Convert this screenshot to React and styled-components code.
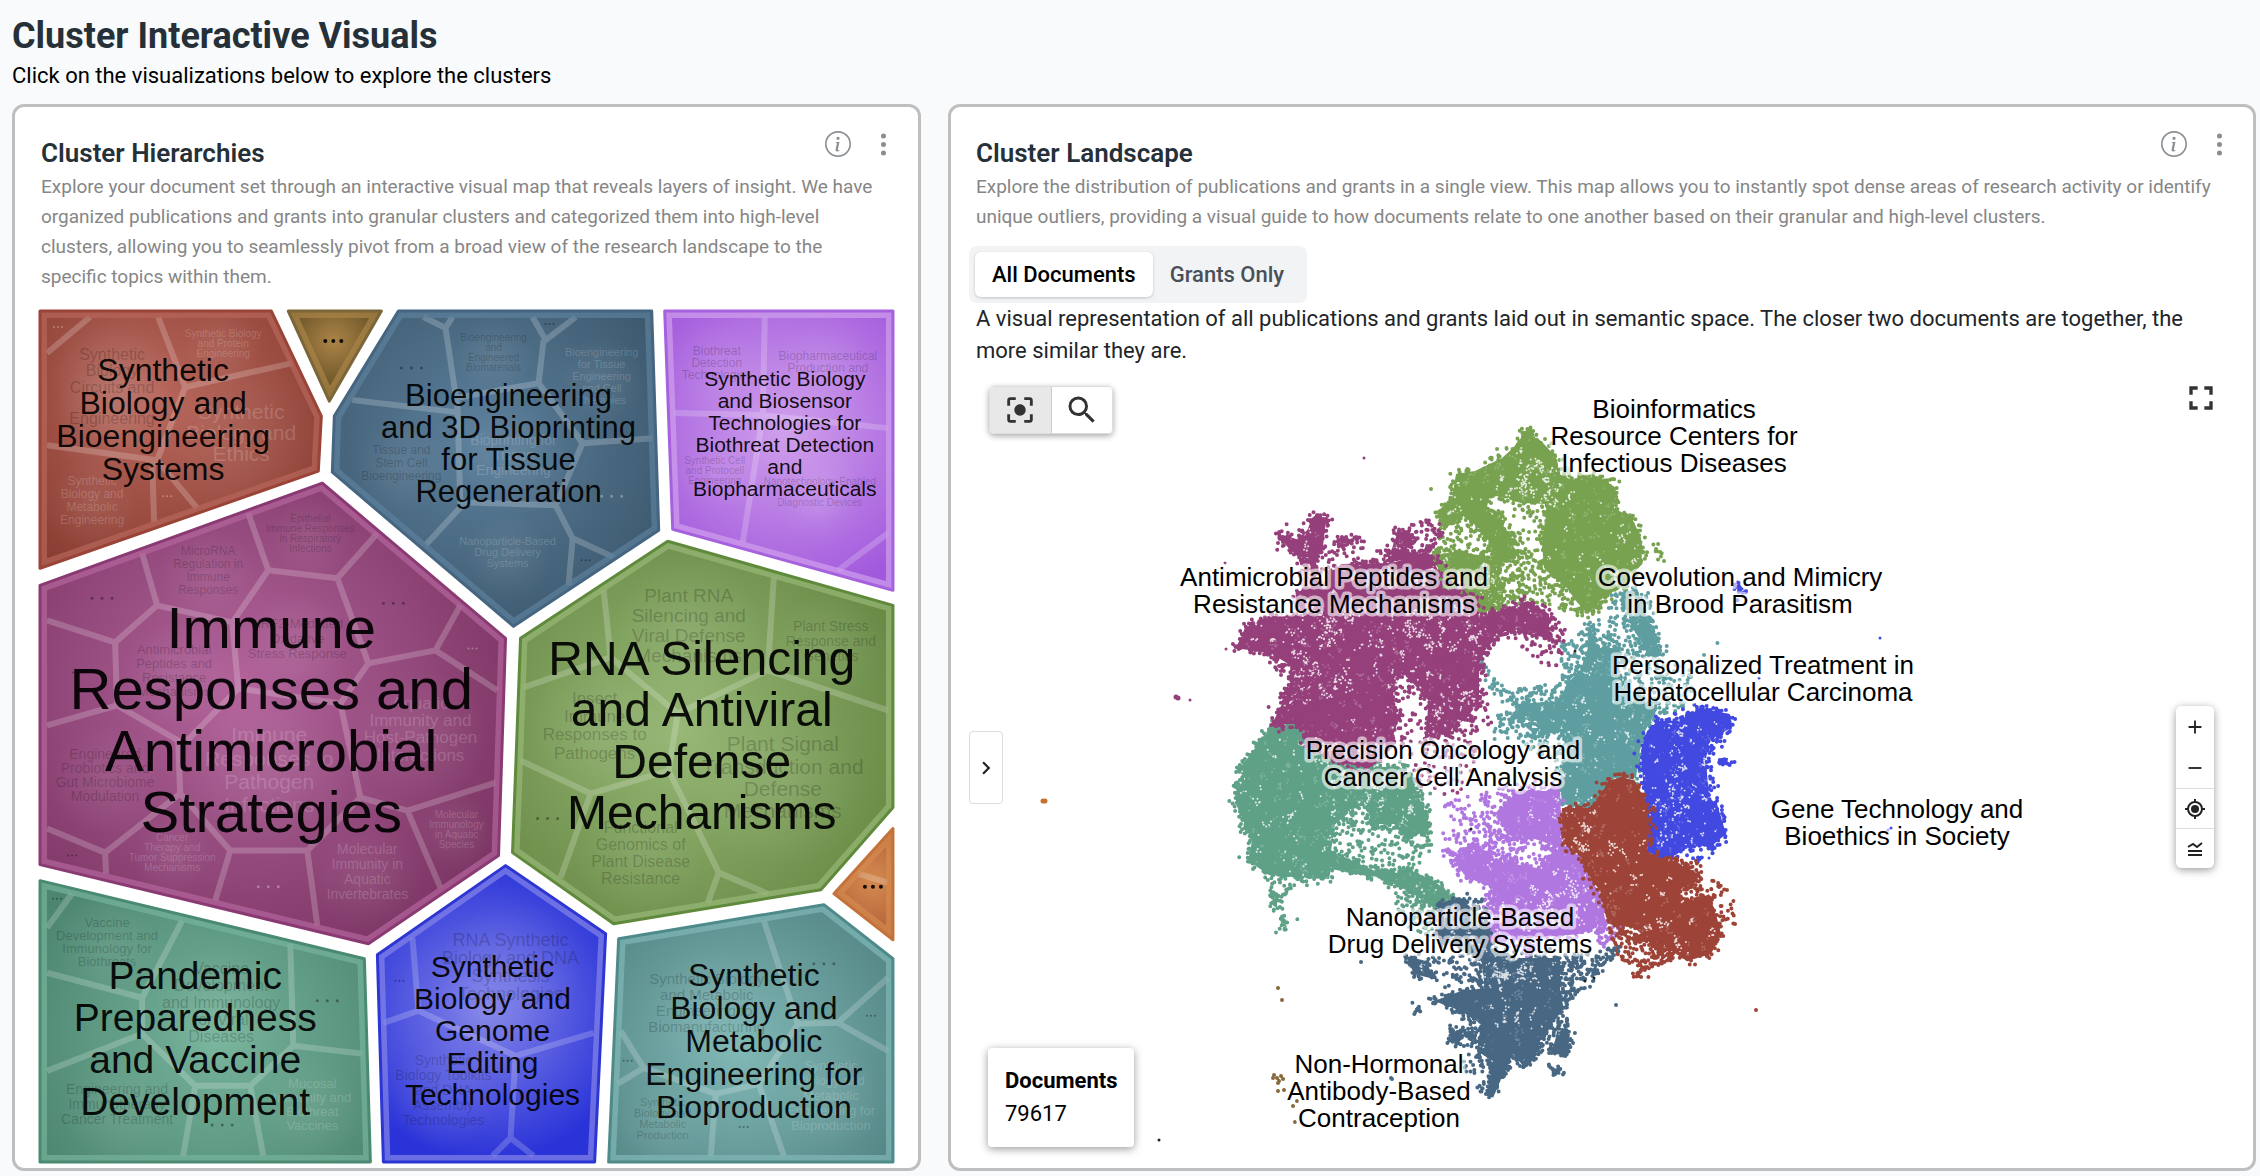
import React, { useMemo, useState } from "react";
import styled, { createGlobalStyle } from "styled-components";
import { BsInfoCircle, BsThreeDotsVertical } from "react-icons/bs";
import { MdAdd, MdCenterFocusStrong, MdChevronRight, MdFullscreen, MdRemove, MdSearch } from "react-icons/md";

const GlobalStyle = createGlobalStyle`
    * {
        box-sizing: border-box;
    }
    body {
        margin: 0;
        background-color: #f9fafb;
        font-family: Roboto, "Liberation Sans", sans-serif;
        color: #212529;
    }
    button {
        font-family: inherit;
        border: none;
        padding: 0;
        cursor: pointer;
    }
`

const Page = styled.main`
    padding: 14px 4px 4px 12px;
`

const PageTitle = styled.h1`
    margin: 0 0 4px;
    font-size: 36px;
    line-height: 44px;
    font-weight: 700;
    color: #263038;
`

const PageHint = styled.p`
    margin: 0 0 14px;
    font-size: 22px;
    line-height: 28px;
    color: #000;
`

const Cards = styled.div`
    display: grid;
    grid-template-columns: 41fr 59fr;
    gap: 27px;
`

const Card = styled.section`
    display: flex;
    flex-direction: column;
    padding: ${(props) => props.$pad};
    background-color: #fff;
    border: 3px solid #bfbfbf;
    border-radius: 12px;
`

const CardText = styled.div`
    padding: 0 ${(props) => props.$inset}px;
`

const CardHeader = styled.header`
    display: flex;
    justify-content: space-between;
    align-items: flex-start;
`

const CardTitle = styled.h2`
    margin: 0 0 3px;
    font-size: 26px;
    line-height: 32px;
    font-weight: 600;
    color: #263038;
`

const CardActions = styled.div`
    display: flex;
    gap: 19px;
    margin: -6px -5px 0 0;
`

const IconButton = styled.button`
    display: flex;
    background: none;
    color: #8a8f94;
`

const Description = styled.p`
    margin: 0;
    font-size: 19px;
    line-height: 30px;
    color: #868686;
`

const TreeSvg = styled.svg`
    display: block;
    width: 100%;
    margin-top: 16px;
    font-family: "Liberation Sans", Arial, sans-serif;
`

const Tabs = styled.div`
    display: flex;
    align-self: flex-start;
    margin-top: 14px;
    padding: 6px;
    background-color: #f1f3f5;
    border-radius: 8px;
`

const Tab = styled.button`
    height: 45px;
    padding: 0 17px;
    font-size: 22px;
    font-weight: 500;
    border-radius: 6px;
    color: ${(props) => (props.$active ? "#000" : "#495057")};
    background-color: ${(props) => (props.$active ? "#fff" : "transparent")};
    box-shadow: ${(props) => (props.$active ? "0 1px 3px rgba(0, 0, 0, 0.2)" : "none")};
`

const Summary = styled.p`
    margin: 0;
    padding: 0 7px;
    font-size: 22px;
    line-height: 32px;
`

const MapArea = styled.div`
    position: relative;
`

const MapSvg = styled.svg`
    display: block;
    width: 100%;
    font-family: "Liberation Sans", Arial, sans-serif;
`

const SelectTools = styled.div`
    position: absolute;
    top: 19px;
    left: 20px;
    display: flex;
    border-radius: 5px;
    overflow: hidden;
    border: 1px solid #ddd;
    box-shadow: 0 2px 6px rgba(0, 0, 0, 0.35);
`

const ToolButton = styled.button`
    display: flex;
    align-items: center;
    justify-content: center;
    width: 61px;
    height: 46px;
    color: #333;
    background-color: ${(props) => (props.$active ? "#e8e8e8" : "#fff")};
    border-left: ${(props) => (props.$divided ? "1px solid #ccc" : "none")};
`

const FullscreenButton = styled(IconButton)`
    position: absolute;
    top: 11px;
    right: 14px;
    color: #333;
`

const ExpandButton = styled.button`
    position: absolute;
    top: 364px;
    left: 0;
    display: flex;
    align-items: center;
    justify-content: center;
    width: 34px;
    height: 73px;
    color: #222;
    background-color: #fff;
    border: 1px solid #ddd;
    border-radius: 4px;
`

const ZoomTools = styled.div`
    position: absolute;
    top: 339px;
    right: 21px;
    display: flex;
    flex-direction: column;
    width: 38px;
    border-radius: 6px;
    overflow: hidden;
    box-shadow: 0 2px 8px rgba(0, 0, 0, 0.4);
`

const ZoomButton = styled.button`
    display: flex;
    align-items: center;
    justify-content: center;
    height: ${(props) => (props.$divided ? 40 : 41)}px;
    color: #222;
    background-color: #fff;
    border-top: ${(props) => (props.$divided ? "1px solid #ddd" : "none")};
`

const CountBox = styled.dl`
    position: absolute;
    left: 19px;
    bottom: 12px;
    margin: 0;
    padding: 16px 17px 17px;
    background-color: #fff;
    border-radius: 4px;
    box-shadow: 0 2px 8px rgba(0, 0, 0, 0.4);
    font-size: 22px;
    line-height: 33px;
    color: #000;

    dt {
        font-weight: 700;
    }
    dd {
        margin: 0;
    }
`

// Each cell: outline, inner divisions, a main label and the labels of its sub clusters.
// sub label: [lines, centre x, first baseline, font size, line height, light]
const cells = [
    {
        id: "red",
        edge: "#84382d",
        mid: "#b7655a",
        line: "#9a4438",
        points: "40,311 271,311 321,416 318,471 40,568",
        center: [163, 400, 220],
        divisions: "M47 353L90 317M158 317L185 387L157 460M185 387L292 363M47 445L157 460M152 460L154 522M157 460L197 508",
        label: [["Synthetic", "Biology and", "Bioengineering", "Systems"], 163, 381, 32, 33],
        subs: [
            [["Synthetic", "Biology"], 112, 360, 16, 16],
            [["Circuits and"], 112, 393, 16, 16],
            [["Engineering"], 112, 424, 16, 16],
            [["Synthetic Biology", "and Protein", "Engineering"], 223, 337, 10, 10, 1],
            [["Synthetic", "Biology and", "Ethics"], 241, 419, 21, 21, 1],
            [["Synthetic", "Biology and", "Metabolic", "Engineering"], 92, 485, 12, 13, 1],
        ],
        dots: [[58, 327, 1, 1], [167, 496, 1, 1]],
    },
    {
        id: "brown",
        edge: "#5e4a22",
        mid: "#ab8447",
        line: "#7a6639",
        points: "288,311 381,311 329,401",
        center: [333, 341, 55],
        divisions: "",
        label: [[], 0, 0, 0, 0],
        subs: [],
        dots: [[333, 341, 2, 0, 1]],
    },
    {
        id: "steel",
        edge: "#3a566b",
        mid: "#5d809c",
        line: "#456580",
        points: "398,311 651,311 658,530 513,626 332,472 334,416",
        center: [480, 440, 220],
        divisions: "M352 400L455 412M532 317L545 340L575 317M543 340L538 383L455 398M423 317L445 328L452 317M445 328L457 407L460 507L425 545M538 383L582 443L652 438M582 443L555 505L460 502M555 505L572 538L568 585M572 538L613 557",
        label: [["Bioengineering", "and 3D Bioprinting", "for Tissue", "Regeneration"], 508, 406, 31, 32],
        subs: [
            [["Bioengineering", "and", "Engineered", "Biomaterials"], 493, 341, 10, 10],
            [["Bioengineering", "for Tissue", "Engineering", "and Cell", "Therapies"], 601, 356, 11, 12, 1],
            [["Tissue and", "Stem Cell", "Bioengineering"], 401, 454, 12, 13],
            [["Bioprinting for", "Tissue", "Engineering"], 513, 445, 14, 15, 1],
            [["Nanoparticle-Based", "Drug Delivery", "Systems"], 507, 545, 11, 11, 1],
        ],
        dots: [[411, 368, 2], [611, 496, 2, 1], [549, 324, 1], [585, 560, 1]],
    },
    {
        id: "violet",
        edge: "#a158dc",
        mid: "#d0a0ec",
        line: "#a661dd",
        points: "664,311 892,311 892,590 672,529",
        center: [785, 430, 170],
        divisions: "M764 317L762 415L742 542M673 413L762 415L887 428M887 533L837 570",
        label: [["Synthetic Biology", "and Biosensor", "Technologies for", "Biothreat Detection", "and", "Biopharmaceuticals"], 784, 386, 21, 22],
        subs: [
            [["Biothreat", "Detection", "Technologies"], 716, 355, 12, 12],
            [["Biopharmaceutical", "Production and"], 827, 360, 12, 12],
            [["Synthetic Cell", "and Protocell", "Engineering"], 714, 464, 10, 10],
            [["Nanotechnology-Enabled"], 819, 485, 10, 10],
            [["Diagnostic Devices"], 819, 506, 10, 10],
        ],
        dots: [],
    },
    {
        id: "magenta",
        edge: "#77315f",
        mid: "#b3659c",
        line: "#8a3a72",
        points: "322,483 505,638 498,855 368,943 40,864 40,585",
        center: [240, 690, 320],
        divisions: "M142 553L157 605L115 642L47 620M115 642L117 705L47 725M117 705L178 740L180 793L105 852L47 828M105 852L106 873M180 793L230 850L215 900M230 850L307 850L317 925M307 850L360 797L407 810L440 887M407 810L495 782M360 797L340 703L238 688L187 740M238 688L232 622L157 605M232 622L268 570L248 513M268 570L337 578L377 533M337 578L368 663L340 703M368 663L435 650L460 605M435 650L497 690",
        label: [["Immune", "Responses and", "Antimicrobial", "Strategies"], 271, 648, 58, 61],
        subs: [
            [["MicroRNA", "Regulation in", "Immune", "Responses"], 208, 555, 12, 13],
            [["Epithelial", "Immune Responses", "in Respiratory", "Infections"], 310, 522, 10, 10],
            [["Antimicrobial", "Peptides and", "Resistance", "Mechanisms"], 174, 654, 13, 14],
            [["NRF2-Mediated", "Oxidative", "Stress Response"], 297, 628, 13, 15],
            [["Engineered", "Probiotics and", "Gut Microbiome", "Modulation"], 105, 758, 14, 14],
            [["Cancer", "Therapy and", "Tumor Suppression", "Mechanisms"], 172, 840, 10, 10, 1],
            [["Immune", "Responses to", "Pathogen", "Infections"], 269, 742, 21, 23, 1],
            [["Aquatic", "Immunity and", "Host-Pathogen", "Interactions"], 420, 709, 17, 17, 1],
            [["Molecular", "Immunology", "in Aquatic", "Species"], 456, 817, 10, 10, 1],
            [["Molecular", "Immunity in", "Aquatic", "Invertebrates"], 367, 853, 14, 15, 1],
        ],
        dots: [[102, 598, 2], [393, 603, 2], [77, 672, 1], [72, 855, 1], [268, 886, 2, 1], [472, 648, 1, 1]],
    },
    {
        id: "green",
        edge: "#638540",
        mid: "#97b876",
        line: "#5f8a3c",
        points: "667,541 892,605 892,807 820,889 613,923 512,852 520,638",
        center: [680, 730, 260],
        divisions: "M603 590L610 657L523 687M610 657L677 713L767 670L773 577M767 670L887 710M677 713L668 770L590 793L520 760M590 793L560 877M668 770L718 872L707 902M718 872L767 893",
        label: [["RNA Silencing", "and Antiviral", "Defense", "Mechanisms"], 701, 675, 48, 51],
        subs: [
            [["Plant RNA", "Silencing and", "Viral Defense", "Mechanisms"], 688, 602, 19, 20],
            [["Plant Stress", "Response and", "Genetics"], 830, 631, 14, 15],
            [["Insect", "Immune", "Responses to", "Pathogens"], 594, 704, 17, 18],
            [["Plant Signal", "Transduction and", "Defense", "Mechanisms"], 782, 751, 21, 22],
            [["Functional", "Genomics of", "Plant Disease", "Resistance"], 640, 832, 16, 17],
        ],
        dots: [[547, 818, 2]],
    },
    {
        id: "orange",
        edge: "#b5643c",
        mid: "#d48a4f",
        line: "#c4713a",
        points: "892,828 833,893 892,939",
        center: [872, 880, 50],
        divisions: "M857 873L887 882",
        label: [[], 0, 0, 0, 0],
        subs: [],
        dots: [[872, 886, 2, 0, 1]],
    },
    {
        id: "sea",
        edge: "#4c8570",
        mid: "#76b39b",
        line: "#4b8a72",
        points: "40,880 364,958 370,1161 40,1161",
        center: [215, 1040, 210],
        divisions: "M47 927L72 893M182 920L142 997L47 972M142 997L142 1033L47 1070M142 1033L195 1085L250 1085L293 1045L363 1053M195 1085L183 1155M250 1085L263 1155M293 1045L290 943",
        label: [["Pandemic", "Preparedness", "and Vaccine", "Development"], 195, 988, 39, 42],
        subs: [
            [["Vaccine", "Development and", "Immunology for", "Biothreats"], 107, 926, 13, 13],
            [["Vaccine", "Development", "and Immunology", "for Viral", "Diseases"], 221, 973, 16, 17],
            [["Engineering and", "Immunotherapy", "Cancer Treatment"], 117, 1093, 14, 15],
            [["Mucosal", "Immunity and", "Biothreat", "Vaccines"], 312, 1087, 13, 14, 1],
        ],
        dots: [[327, 1000, 2], [222, 1124, 2], [57, 898, 1]],
    },
    {
        id: "blue",
        edge: "#2a33d8",
        mid: "#8485e8",
        line: "#2d36d2",
        points: "505,865 605,933 594,1161 383,1161 377,954",
        center: [485, 1010, 150],
        divisions: "M412 937L418 1010L383 1022M418 1010L515 1055L593 1032M515 1055L510 1137L492 1155M510 1137L533 1155",
        label: [["Synthetic", "Biology and", "Genome", "Editing", "Technologies"], 492, 976, 30, 32],
        subs: [
            [["RNA Synthetic", "Biology and DNA", "Synthesis", "Technologies"], 510, 945, 18, 18],
            [["Synthetic", "Biology Toolkits", "and DNA", "Assembly", "Technologies"], 443, 1064, 14, 15],
        ],
        dots: [[399, 980, 1]],
    },
    {
        id: "teal",
        edge: "#4f8180",
        mid: "#80b8b6",
        line: "#4e8a8a",
        points: "823,904 892,958 892,1161 608,1161 618,938",
        center: [740, 1050, 200],
        divisions: "M763 920L797 1023L837 1022L887 977M837 1022L887 1050M797 1023L758 1083L715 1093L710 1155M758 1083L783 1155M715 1093L643 1067L620 1030M617 1083L643 1067",
        label: [["Synthetic", "Biology and", "Metabolic", "Engineering for", "Bioproduction"], 753, 985, 32, 33],
        subs: [
            [["Synthetic Biology", "and Metabolic", "Engineering for", "Biomanufacturing"], 706, 983, 15, 16],
            [["Synthetic", "Biology and", "Metabolic", "Production"], 662, 1105, 11, 11],
            [["Synthetic", "Biology and", "Metabolic", "Engineering for", "Bioproduction"], 830, 1069, 13, 15, 1],
        ],
        dots: [[823, 963, 2], [870, 1015, 1], [627, 1060, 1], [743, 1126, 1]],
    },
]

const TextLines = ({ lines, x, y, size, step, ...rest }) => (
    <text x={x} y={y} fontSize={size} textAnchor="middle" {...rest}>
        {lines.map((line, index) => (
            <tspan key={index} x={x} dy={index === 0 ? 0 : step}>{line}</tspan>
        ))}
    </text>
)

const Dots = ({ x, y, r, light, strong }) => {
    const gap = r === 2 && !strong ? 10 : strong ? 8 : 4;
    return (
        <path
            d={`M${x - gap} ${y}h0M${x} ${y}h0M${x + gap} ${y}h0`}
            stroke={light ? "#fff" : "#000"}
            strokeOpacity={strong ? 0.9 : light ? 0.3 : 0.35}
            strokeWidth={strong ? 4 : r + 1}
            strokeLinecap="round"
        />
    )
}

const Cell = ({ cell }) => {
    const [cx, cy, r] = cell.center;
    const [lines, x, y, size, step] = cell.label;

    return (
        <g>
            <defs>
                <radialGradient id={`fill-${cell.id}`} gradientUnits="userSpaceOnUse" cx={cx} cy={cy} r={r}>
                    <stop offset="0" stopColor={cell.mid} />
                    <stop offset="1" stopColor={cell.edge} />
                </radialGradient>
                <clipPath id={`clip-${cell.id}`}>
                    <polygon points={cell.points} />
                </clipPath>
            </defs>
            <g clipPath={`url(#clip-${cell.id})`}>
                <polygon points={cell.points} fill={`url(#fill-${cell.id})`} />
                {cell.subs.map(([names, sx, sy, fs, lh], index) => (
                    <circle key={index} cx={sx} cy={sy + (names.length - 1) * lh / 2} r={fs * 4} fill="url(#glow)" />
                ))}
                <path d={cell.divisions} fill="none" stroke="#fff" strokeOpacity="0.2" strokeWidth="6" strokeLinejoin="round" />
                <polygon points={cell.points} fill="none" stroke={cell.mid} strokeOpacity="0.7" strokeWidth="14" />
            </g>
            <polygon points={cell.points} fill="none" stroke={cell.line} strokeWidth="3" strokeLinejoin="round" />
            {cell.subs.map(([names, sx, sy, fs, lh, light], index) => (
                <TextLines
                    key={index}
                    lines={names}
                    x={sx}
                    y={sy}
                    size={fs}
                    step={lh}
                    fill={light ? "#fff" : "#000"}
                    fillOpacity={light ? 0.18 : 0.2}
                />
            ))}
            {cell.dots.map(([dx, dy, dr, light, strong], index) => (
                <Dots key={index} x={dx} y={dy} r={dr} light={light} strong={strong} />
            ))}
            <TextLines lines={lines} x={x} y={y} size={size} step={step} fill="#000" fillOpacity="0.92" />
        </g>
    )
}

const ClusterTree = () => (
    <TreeSvg viewBox="38 308 856 855" role="img" aria-label="Cluster hierarchy map">
        <defs>
            <radialGradient id="glow">
                <stop offset="0" stopColor="#fff" stopOpacity="0.08" />
                <stop offset="1" stopColor="#fff" stopOpacity="0" />
            </radialGradient>
        </defs>
        {cells.map((cell) => <Cell key={cell.id} cell={cell} />)}
    </TreeSvg>
)

// Document clouds: solid areas get a ragged rim, sparse areas are [outline, number of documents],
// thin areas are [outline, number of gaps] inside a solid one.
const clouds = [
    {
        color: "#5fa187",
        solid: [
            "1271,723 1302,723 1305,740 1332,760 1367,767 1397,765 1414,777 1413,787 1421,803 1429,827 1405,840 1397,823 1370,823 1366,803 1354,807 1334,823 1330,850 1374,870 1393,877 1366,875 1330,868 1328,878 1298,877 1267,873 1247,860 1251,840 1235,803 1235,790 1245,777 1237,770 1252,750",
            "1405,867 1433,880 1455,897 1433,907 1413,893 1393,883 1374,870 1395,872",
            "1271,893 1276,893 1276,907 1273,905",
            "1279,918 1283,918 1286,926 1281,925",
        ],
        sparse: [
            ["1330,790 1430,790 1432,850 1410,870 1440,900 1425,930 1400,890 1340,860", 380],
            ["1232,785 1268,723 1280,730 1245,800", 60],
            ["1234,800 1250,800 1255,850 1240,830", 20],
            ["1265,870 1310,876 1290,888 1272,905", 40],
            ["1390,890 1440,900 1430,935 1400,925", 60],
        ],
        thin: [["1335,780 1425,780 1430,830 1340,830", 30]],
    },
    {
        color: "#5f9ea0",
        solid: [
            "1589,623 1596,647 1619,647 1615,683 1657,707 1644,730 1638,753 1635,777 1615,775 1595,800 1587,807 1561,803 1559,780 1562,760 1569,730 1543,733 1535,720 1512,717 1516,703 1558,700 1566,683 1585,663",
            "1622,590 1636,590 1655,640 1661,655 1650,655 1630,625",
        ],
        sparse: [
            ["1480,655 1505,690 1565,680 1570,710 1520,740 1490,740 1500,700 1480,680", 170],
            ["1560,640 1600,620 1620,650 1600,700 1560,690", 180],
            ["1605,590 1650,590 1665,660 1692,670 1694,700 1665,715 1610,700", 360],
            ["1500,720 1570,720 1565,765 1530,750", 90],
            ["1660,660 1720,640 1690,700 1670,700", 8],
        ],
        thin: [],
    },
    {
        color: "#78a250",
        solid: [
            "1527,428 1543,443 1556,457 1558,473 1573,480 1596,475 1615,487 1613,507 1631,517 1640,537 1641,563 1619,587 1600,597 1587,613 1575,600 1566,587 1543,567 1541,543 1546,503 1520,502 1489,493 1485,510 1504,533 1493,547 1478,527 1462,515 1443,528 1437,510 1451,497 1455,473 1474,470 1501,457 1512,447",
            "1430,555 1458,550 1489,557 1504,587 1497,607 1478,613 1458,593 1439,587 1437,567",
            "1485,510 1500,520 1515,550 1512,562 1495,560",
        ],
        sparse: [
            ["1440,520 1495,500 1520,540 1570,600 1590,618 1540,605 1500,610 1478,618 1435,560", 480],
            ["1495,500 1548,500 1545,570 1520,555", 40],
            ["1555,465 1615,478 1618,505 1570,490", 70],
            ["1540,560 1640,570 1600,610 1585,620", 160],
            ["1640,545 1665,540 1660,565 1642,560", 10],
        ],
        thin: [["1530,455 1570,475 1545,505 1500,495", 25], ["1485,560 1500,560 1500,605 1480,605", 15]],
    },
    {
        color: "#95407b",
        solid: [
            "1340,563 1390,562 1428,552 1439,573 1439,587 1474,597 1478,617 1527,600 1548,613 1548,637 1504,630 1485,647 1478,663 1478,700 1466,717 1443,733 1424,737 1428,700 1401,670 1392,693 1397,720 1386,753 1367,767 1332,760 1305,740 1302,723 1271,723 1286,693 1294,667 1271,653 1235,647 1244,627 1263,617 1302,613 1294,597 1321,583",
            "1275,532 1302,540 1311,517 1317,512 1325,520 1321,553 1302,557 1290,550",
            "1390,550 1397,530 1413,533 1405,550 1428,557 1393,560",
            "1336,540 1345,536 1352,540 1337,544",
            "1304,557 1315,557 1316,595 1300,595",
        ],
        sparse: [
            ["1395,530 1436,512 1443,535 1425,555 1390,560", 90],
            ["1478,605 1550,610 1565,630 1560,665 1540,665 1500,635 1485,660", 130],
            ["1440,640 1480,650 1495,720 1470,770 1458,793 1425,795 1385,730 1395,690", 270],
            ["1262,650 1320,650 1310,740 1275,725 1280,680", 150],
            ["1300,555 1350,545 1440,555 1470,600 1300,620", 220],
            ["1336,536 1364,534 1362,550 1336,544", 14],
            ["1300,515 1328,510 1326,545 1300,540", 16],
        ],
        thin: [
            ["1390,660 1480,690 1470,730 1400,745 1385,700", 60],
            ["1290,605 1480,605 1480,650 1290,645", 50],
            ["1285,655 1325,655 1315,700 1290,700", 30],
        ],
    },
    {
        color: "#b177e0",
        solid: [
            "1496,813 1516,790 1559,790 1561,840 1583,857 1589,877 1599,893 1605,923 1579,933 1532,937 1490,943 1488,927 1492,887 1460,870 1453,857 1472,840 1496,860 1536,867 1559,847 1540,840 1508,830",
            "1520,943 1535,943 1530,957",
        ],
        sparse: [
            ["1440,800 1520,780 1560,780 1560,800 1500,880 1450,872 1440,850", 320],
            ["1485,820 1562,820 1565,870 1490,870", 180],
            ["1480,870 1500,890 1500,935 1484,930", 70],
            ["1590,915 1605,905 1622,930 1600,950", 50],
        ],
        thin: [["1490,880 1600,870 1600,925 1490,935", 40]],
    },
    {
        color: "#4149e0",
        solid: [
            "1646,730 1657,720 1677,720 1700,707 1728,713 1730,727 1707,740 1705,760 1708,797 1716,803 1725,833 1713,843 1686,847 1664,860 1646,850 1648,827 1642,780 1640,750",
            "1734,586 1738,582 1743,588 1738,591",
            "1720,757 1727,757 1726,764 1720,764",
        ],
        sparse: [
            ["1655,720 1695,702 1738,712 1730,740 1710,760 1730,830 1705,862 1670,860", 220],
        ],
        thin: [["1655,720 1705,720 1705,850 1655,850", 40]],
    },
    {
        color: "#9e4337",
        solid: [
            "1561,807 1587,807 1599,797 1607,780 1621,776 1634,780 1646,803 1648,827 1646,850 1664,860 1686,863 1694,877 1674,893 1695,900 1708,893 1716,917 1720,933 1710,953 1686,960 1666,947 1650,943 1634,927 1607,923 1599,890 1583,867 1581,857 1563,843",
            "1634,972 1642,964 1640,970 1636,975",
        ],
        sparse: [
            ["1605,920 1660,940 1680,960 1650,970 1618,958", 160],
            ["1690,870 1716,878 1735,896 1733,925 1700,930", 60],
            ["1660,855 1700,860 1705,890 1670,895", 80],
        ],
        thin: [["1565,810 1585,810 1590,850 1565,845", 15]],
    },
    {
        color: "#476783",
        solid: [
            "1437,903 1460,897 1476,913 1488,927 1490,947 1516,957 1559,957 1559,993 1563,1007 1540,1037 1534,1057 1524,1067 1512,1053 1502,1073 1492,1097 1486,1090 1492,1060 1476,1050 1480,1023 1460,1010 1433,1000 1460,990 1484,987 1480,957 1437,937",
            "1405,955 1425,960 1433,978 1413,973",
            "1414,1007 1420,1007 1420,1011 1414,1011",
            "1556,1030 1569,1033 1565,1055 1552,1050",
            "1551,1065 1560,1073 1557,1074",
            "1450,1030 1466,1035 1456,1042 1450,1041",
        ],
        sparse: [
            ["1555,955 1622,945 1590,985 1560,1012", 170],
            ["1425,955 1490,950 1500,1060 1448,1040 1450,990", 240],
            ["1460,1050 1515,1050 1500,1080 1485,1100 1465,1075", 70],
            ["1530,1030 1570,1015 1568,1055 1540,1050", 70],
            ["1455,895 1485,897 1490,930 1440,930", 50],
        ],
        thin: [["1480,955 1560,955 1555,990 1490,990", 20]],
    },
]

const strays = [
    { color: "#95407b", size: 5, points: [[1175, 696], [1177, 697]] },
    { color: "#95407b", size: 3, points: [[1189, 699], [1363, 457], [1224, 562], [1225, 648]] },
    { color: "#78a250", size: 4, points: [[1430, 488], [1655, 548], [1663, 560]] },
    { color: "#4149e0", size: 3, points: [[1879, 637], [1890, 827], [1758, 677], [1708, 857], [1887, 829], [1712, 852]] },
    { color: "#9e4337", size: 4, points: [[1755, 1009], [1734, 923]] },
    { color: "#c8712f", size: 5, points: [[1042, 800], [1044, 800]] },
    { color: "#476783", size: 4, points: [[1360, 961], [1390, 1077], [1615, 1004], [1391, 1078]] },
    { color: "#87683a", size: 4, points: [[1277, 987], [1281, 999], [1273, 1074], [1278, 1080], [1282, 1078], [1276, 1077], [1272, 1077], [1280, 1075], [1277, 1082], [1283, 1089], [1277, 1090], [1296, 1100], [1292, 1105], [1294, 1121]] },
    { color: "#222", size: 3, points: [[1470, 828], [1584, 980], [1593, 977], [1158, 1139], [1574, 650]] },
]

const regions = [
    [["Bioinformatics", "Resource Centers for", "Infectious Diseases"], 1673, 417],
    [["Coevolution and Mimicry", "in Brood Parasitism"], 1739, 585],
    [["Antimicrobial Peptides and", "Resistance Mechanisms"], 1333, 585],
    [["Personalized Treatment in", "Hepatocellular Carcinoma"], 1762, 673],
    [["Precision Oncology and", "Cancer Cell Analysis"], 1442, 758],
    [["Gene Technology and", "Bioethics in Society"], 1896, 817],
    [["Nanoparticle-Based", "Drug Delivery Systems"], 1459, 925],
    [["Non-Hormonal", "Antibody-Based", "Contraception"], 1378, 1072],
]

const makeRandom = (seed) => () => {
    seed = (seed + 0x6d2b79f5) | 0;
    let t = Math.imul(seed ^ (seed >>> 15), 1 | seed);
    t = (t + Math.imul(t ^ (t >>> 7), 61 | t)) ^ t;
    return ((t ^ (t >>> 14)) >>> 0) / 4294967296;
}

const parse = (text) => text.split(" ").map((pair) => pair.split(",").map(Number));

const inside = ([x, y], shape) => {
    let hit = false;
    for (let i = 0, j = shape.length - 1; i < shape.length; j = i++) {
        const [xi, yi] = shape[i];
        const [xj, yj] = shape[j];
        if (yi > y !== yj > y && x < ((xj - xi) * (y - yi)) / (yj - yi) + xi) hit = !hit;
    }
    return hit;
}

const scatter = (shape, count, random) => {
    const xs = shape.map((p) => p[0]);
    const ys = shape.map((p) => p[1]);
    const left = Math.min(...xs);
    const top = Math.min(...ys);
    const width = Math.max(...xs) - left;
    const height = Math.max(...ys) - top;
    const points = [];
    for (let tries = 0; points.length < count && tries < count * 20; tries++) {
        const point = [left + random() * width, top + random() * height];
        if (inside(point, shape)) points.push(point);
    }
    return points;
}

const rim = (shape, random) => {
    const points = [];
    shape.forEach(([x, y], index) => {
        const [nx, ny] = shape[(index + 1) % shape.length];
        const steps = Math.hypot(nx - x, ny - y) / 2;
        for (let i = 0; i < steps; i++) {
            const t = random();
            const reach = random() < 0.15 ? 13 : 6;
            const spread = () => (random() + random() - 1) * reach;
            points.push([x + (nx - x) * t + spread(), y + (ny - y) * t + spread()]);
        }
    })
    return points;
}

// Small winding trails, so that the gaps in a solid area come in clumps.
const trails = (starts, random) => starts.flatMap(([x, y]) => {
    const points = [];
    const length = 1 + Math.floor(random() * random() * 9);
    for (let i = 0; i < length; i++) {
        points.push([x, y]);
        x += (random() - 0.5) * 6;
        y += (random() - 0.5) * 8;
    }
    return points;
})

const area = (shape) => Math.abs(shape.reduce((sum, [x, y], i) => {
    const [nx, ny] = shape[(i + 1) % shape.length];
    return sum + x * ny - nx * y;
}, 0)) / 2;

const toPath = (points) => points.map(([x, y]) => `M${x.toFixed(1)} ${y.toFixed(1)}h0`).join("");

const Cloud = ({ cloud, seed }) => {
    const { dots, gaps, faint } = useMemo(() => {
        const random = makeRandom(seed);
        const solid = cloud.solid.map(parse);
        const dots = [
            ...solid.flatMap((shape) => rim(shape, random)),
            ...cloud.sparse.flatMap(([shape, count]) => scatter(parse(shape), count, random)),
        ];
        const thin = cloud.thin
            .flatMap(([shape, count]) => scatter(parse(shape), count, random))
            .filter((point) => solid.some((shape) => inside(point, shape)));
        const gaps = [
            ...solid.flatMap((shape) => trails(scatter(shape, area(shape) / 300, random), random)),
            ...trails(thin, random),
            ...trails(thin, random),
        ];
        const faint = solid.flatMap((shape) => trails(scatter(shape, area(shape) / 180, random), random));
        return { dots: toPath(dots), gaps: toPath(gaps), faint: toPath(faint) };
    }, [cloud, seed]);

    return (
        <g strokeLinecap="round" fill="none">
            {cloud.solid.map((shape, index) => <polygon key={index} points={shape} fill={cloud.color} />)}
            <path d={faint} stroke="#fff" strokeOpacity="0.2" strokeWidth="2" />
            <path d={gaps} stroke="#fff" strokeOpacity="0.8" strokeWidth="2" />
            <path d={dots} stroke={cloud.color} strokeWidth="4" />
        </g>
    )
}

const LandscapeMap = () => (
    <MapSvg viewBox="968 366 1266 792" role="img" aria-label="Cluster landscape map">
        {clouds.map((cloud, index) => <Cloud key={cloud.color} cloud={cloud} seed={index + 11} />)}
        {strays.map(({ color, size, points }, index) => (
            <path key={index} d={toPath(points)} stroke={color} strokeWidth={size} strokeLinecap="round" />
        ))}
        {regions.map(([lines, x, y]) => (
            <TextLines
                key={lines[0]}
                lines={lines}
                x={x}
                y={y}
                size={26}
                step={27}
                fill="#000"
                stroke="#fff"
                strokeOpacity="0.6"
                strokeWidth="7"
                strokeLinejoin="round"
                paintOrder="stroke"
            />
        ))}
    </MapSvg>
)

const TargetIcon = () => (
    <svg width="20" height="20" viewBox="0 0 20 20" fill="none" stroke="currentColor" strokeWidth="2">
        <circle cx="10" cy="10" r="7" />
        <circle cx="10" cy="10" r="4" fill="currentColor" stroke="none" />
        <path d="M10 0v3M10 17v3M0 10h3M17 10h3" />
    </svg>
)

const LayersIcon = () => (
    <svg width="16" height="14" viewBox="0 0 16 14" fill="none" stroke="currentColor" strokeWidth="2">
        <path d="M1 5L6 2L10 5L15 1M1 9h14M1 13h14" />
    </svg>
)

const HeaderActions = () => (
    <CardActions>
        <IconButton aria-label="Information"><BsInfoCircle size={26} /></IconButton>
        <IconButton aria-label="More options"><BsThreeDotsVertical size={27} /></IconButton>
    </CardActions>
)

const App = () => {
    const [tab, setTab] = useState('all');
    const [tool, setTool] = useState('focus');

    return (
        <>
        <GlobalStyle />
        <Page>
            <PageTitle>Cluster Interactive Visuals</PageTitle>
            <PageHint>Click on the visualizations below to explore the clusters</PageHint>
            <Cards>
                <Card $pad="30px 23px 4px">
                    <CardText $inset={3}>
                        <CardHeader>
                            <CardTitle>Cluster Hierarchies</CardTitle>
                            <HeaderActions />
                        </CardHeader>
                        <Description>
                            Explore your document set through an interactive visual map that reveals layers of insight. We have
                            organized publications and grants into granular clusters and categorized them into high-level
                            clusters, allowing you to seamlessly pivot from a broad view of the research landscape to the
                            specific topics within them.
                        </Description>
                    </CardText>
                    <ClusterTree />
                </Card>
                <Card $pad="30px 18px 4px">
                    <CardText $inset={7}>
                        <CardHeader>
                            <CardTitle>Cluster Landscape</CardTitle>
                            <HeaderActions />
                        </CardHeader>
                        <Description>
                            Explore the distribution of publications and grants in a single view. This map allows you to instantly
                            spot dense areas of research activity or identify unique outliers, providing a visual guide to how
                            documents relate to one another based on their granular and high-level clusters.
                        </Description>
                    </CardText>
                    <Tabs role="tablist">
                        <Tab role="tab" aria-selected={tab === 'all'} $active={tab === 'all'} onClick={() => setTab('all')}>All Documents</Tab>
                        <Tab role="tab" aria-selected={tab === 'grants'} $active={tab === 'grants'} onClick={() => setTab('grants')}>Grants Only</Tab>
                    </Tabs>
                    <Summary>
                        A visual representation of all publications and grants laid out in semantic space. The closer two
                        documents are together, the more similar they are.
                    </Summary>
                    <MapArea>
                        <LandscapeMap />
                        <SelectTools>
                            <ToolButton aria-label="Focus" $active={tool === 'focus'} onClick={() => setTool('focus')}>
                                <MdCenterFocusStrong size={34} />
                            </ToolButton>
                            <ToolButton aria-label="Search" $divided $active={tool === 'search'} onClick={() => setTool('search')}>
                                <MdSearch size={36} />
                            </ToolButton>
                        </SelectTools>
                        <FullscreenButton aria-label="Full screen"><MdFullscreen size={40} /></FullscreenButton>
                        <ExpandButton aria-label="Open panel"><MdChevronRight size={26} /></ExpandButton>
                        <ZoomTools>
                            <ZoomButton aria-label="Zoom in"><MdAdd size={22} /></ZoomButton>
                            <ZoomButton aria-label="Zoom out"><MdRemove size={22} /></ZoomButton>
                            <ZoomButton aria-label="Recenter" $divided><TargetIcon /></ZoomButton>
                            <ZoomButton aria-label="Layers" $divided><LayersIcon /></ZoomButton>
                        </ZoomTools>
                        <CountBox>
                            <dt>Documents</dt>
                            <dd>79617</dd>
                        </CountBox>
                    </MapArea>
                </Card>
            </Cards>
        </Page>
        </>
    )
}

export default App;
